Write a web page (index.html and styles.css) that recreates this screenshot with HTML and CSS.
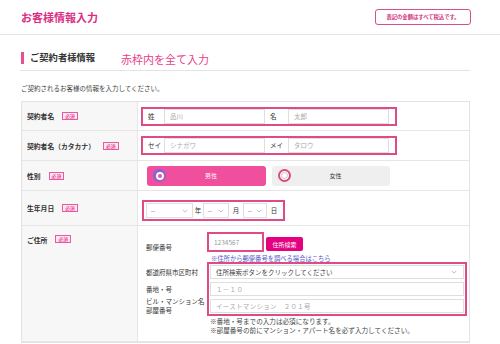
FILE: index.html
```html
<!DOCTYPE html>
<html lang="ja">
<head>
  <meta charset="UTF-8">
  <meta name="viewport" content="width=device-width, initial-scale=1.0">
  <title>お客様情報入力</title>
  <link rel="stylesheet" href="styles.css">
</head>
<body>

  <header class="top">
    <h1 class="top-title">お客様情報入力</h1>
    <span class="tax-note">表記の金額はすべて税込です。</span>
  </header>

  <main class="wrap">
    <div class="sec-head">
      <h2 class="sec-title">ご契約者様情報</h2>
      <span class="sec-memo">赤枠内を全て入力</span>
    </div>
    <p class="lead">ご契約されるお客様の情報を入力してください。</p>

    <div class="form-table">
      <!-- 契約者名 -->
      <div class="row row-name">
        <div class="th">契約者名<span class="req">必須</span></div>
        <div class="td td-name">
          <div class="redbox name-box">
            <span class="sub">姓</span><span class="field ph">品川</span>
            <span class="sub sub-2">名</span><span class="field ph">太郎</span>
          </div>
        </div>
      </div>

      <div class="row row-kana">
        <div class="th">契約者名（カタカナ）<span class="req">必須</span></div>
        <div class="td td-name">
          <div class="redbox name-box">
            <span class="sub">セイ</span><span class="field ph">シナガワ</span>
            <span class="sub sub-2">メイ</span><span class="field ph">タロウ</span>
          </div>
        </div>
      </div>

      <!-- 性別 -->
      <div class="row row-sex">
        <div class="th">性別<span class="req">必須</span></div>
        <div class="td td-sex">
          <div class="sex-btn is-on">
            <span class="radio"><span class="radio-in"></span></span>
            <span class="sex-label">男性</span>
          </div>
          <div class="sex-btn">
            <span class="radio"><span class="radio-in"></span></span>
            <span class="sex-label">女性</span>
          </div>
        </div>
      </div>

      <!-- 生年月日 -->
      <div class="row row-birth">
        <div class="th">生年月日<span class="req">必須</span></div>
        <div class="td td-birth">
          <div class="redbox date-box">
            <span class="sel sel-y">--<svg class="chev" viewBox="0 0 8 5"><polyline points="1,1 4,4 7,1"/></svg></span>
            <span class="unit">年</span>
            <span class="sel sel-m">--<svg class="chev" viewBox="0 0 8 5"><polyline points="1,1 4,4 7,1"/></svg></span>
            <span class="unit unit-w">月</span>
            <span class="sel sel-d">--<svg class="chev" viewBox="0 0 8 5"><polyline points="1,1 4,4 7,1"/></svg></span>
            <span class="unit unit-w">日</span>
          </div>
        </div>
      </div>

      <!-- ご住所 -->
      <div class="row row-addr">
        <div class="th th-top">ご住所<span class="req">必須</span></div>
        <div class="td td-addr">
          <div class="zip-row">
            <span class="addr-label">郵便番号</span>
            <div class="zip">
              <span class="redbox zip-box">1234567</span>
              <span class="btn-search">住所検索</span>
            </div>
          </div>
          <a class="zip-link" href="#">※住所から郵便番号を調べる場合はこちら</a>
          <div class="addr-block">
            <div class="addr-labels">
              <span class="addr-label">都道府県市区町村</span>
              <span class="addr-label">番地・号</span>
              <span class="addr-label">ビル・マンション名<br>部屋番号</span>
            </div>
            <div class="redbox addr-box">
              <span class="field field-sel">住所検索ボタンをクリックしてください<svg class="chev" viewBox="0 0 8 5"><polyline points="1,1 4,4 7,1"/></svg></span>
              <span class="field ph ph-wide">１－１０</span>
              <span class="field ph ph-wide">イーストマンション　２０１号</span>
            </div>
          </div>
          <p class="notes">※番地・号までの入力は必須になります。<br>※部屋番号の前にマンション・アパート名を必ず入力してください。</p>
        </div>
      </div>
    </div>
  </main>

</body>
</html>
```

FILE: styles.css
```css
/* customer form */

* {
  box-sizing: border-box;
  margin: 0;
  padding: 0;
}

body {
  width: 500px;
  font-family: "Noto Sans CJK JP", "Noto Sans", sans-serif;
  color: #333;
  background-color: #fff;
}

/* Header */
.top {
  height: 35px;
  border-bottom: 1px solid #e4e4e4;
  display: flex;
  align-items: center;
  justify-content: space-between;
  padding: 0 29px 0 21px;
}

.top-title {
  font-size: 11px;
  font-weight: 700;
  line-height: 1;
  color: #dc2d84;
}

.tax-note {
  width: 96px;
  height: 16px;
  border: 1px solid #d94d8a;
  border-radius: 3px;
  display: flex;
  align-items: center;
  justify-content: center;
  font-size: 5.3px;
  font-weight: 700;
  color: #d3307f;
}

/* Section */
.wrap {
  margin-left: 20px;
  width: 450px;
}

.sec-head {
  margin-top: 11px;
  height: 25px;
  display: flex;
  align-items: center;
  border-bottom: 1px solid #e4e4e4;
}

.sec-title {
  display: flex;
  align-items: center;
  gap: 6px;
  padding-left: 1px;
  font-size: 9.3px;
  font-weight: 700;
  line-height: 1;
  color: #333;
}

.sec-title::before {
  content: "";
  width: 3px;
  height: 12px;
  background: #e8518f;
}

.sec-memo {
  margin-left: 26px;
  margin-top: 2px;
  font-size: 11px;
  line-height: 1;
  color: #ea3d8c;
}

.lead {
  margin-top: 12px;
  padding-left: 1px;
  font-size: 6.5px;
  line-height: 10px;
  color: #444;
}

/* Table */
.form-table {
  margin: 8px 0 0 1px;
  width: 449px;
  border: 1px solid #e3e3e3;
}

.row {
  display: grid;
  grid-template-columns: 116px 1fr;
  border-bottom: 1px solid #e6e6e6;
}

.row-name { height: 29px; }
.row-kana { height: 30px; }
.row-sex { height: 30px; }
.row-birth { height: 35px; }
.row-addr { height: 116px; }

.th {
  background-color: #f7f7f7;
  border-right: 1px solid #e6e6e6;
  padding-left: 5px;
  display: flex;
  align-items: center;
  font-size: 6.8px;
  font-weight: 700;
  line-height: 10px;
  color: #333;
}

.th-top {
  align-items: flex-start;
  padding-top: 9px;
}

.req {
  margin-left: 8px;
  height: 8px;
  padding: 0 2px;
  border: 1px solid #e75a9c;
  background: #fde9f2;
  color: #e4007f;
  font-size: 4.8px;
  font-weight: 400;
  line-height: 6px;
}

.td {
  display: flex;
  align-items: center;
}

.redbox {
  border: 2px solid #de4b85;
}

.field {
  height: 15px;
  border: 1px solid #dedede;
  background: #fff;
  display: flex;
  align-items: center;
  padding-left: 5px;
  font-size: 6.5px;
  line-height: 1;
  color: #444;
}

.ph {
  color: #aaa;
}

/* name */
.td-name {
  padding-left: 3px;
}

.name-box {
  width: 256px;
  height: 19px;
  display: flex;
  align-items: center;
  padding-left: 5px;
}

.name-box .field {
  width: 101px;
}

.sub {
  width: 16px;
  font-size: 6.5px;
  line-height: 1;
  color: #333;
}

.sub-2 {
  width: 18px;
  margin-left: 5px;
}

/* sex */
.td-sex {
  padding-left: 9px;
  gap: 6px;
}

.sex-btn {
  width: 118px;
  height: 20px;
  border-radius: 3px;
  background: #efefef;
  display: flex;
  align-items: center;
  padding-left: 6px;
}

.sex-btn.is-on {
  width: 119px;
  background: #ef4f9d;
}

.radio {
  width: 13px;
  height: 13px;
  border-radius: 50%;
  border: 2px solid #dc4a80;
  background: #fff;
  display: flex;
  align-items: center;
  justify-content: center;
}

.radio-in {
  width: 7px;
  height: 7px;
  border-radius: 50%;
  border: 1px solid #c8c8c8;
}

.is-on .radio {
  border: none;
  background: #8a63d2;
}

.is-on .radio-in {
  width: 8px;
  height: 8px;
  border: 2px solid #fff;
  background: #ef4f9d;
}

.sex-label {
  flex: 1;
  text-align: center;
  padding-right: 10px;
  font-size: 6px;
  line-height: 1;
  color: #333;
}

.is-on .sex-label {
  color: #fff;
}

/* birth */
.td-birth {
  align-items: flex-start;
  padding: 9px 0 0 4px;
}

.date-box {
  width: 143px;
  height: 21px;
  display: flex;
  align-items: center;
  padding-left: 2px;
}

.sel {
  height: 15px;
  border: 1px solid #dedede;
  background: #fff;
  display: flex;
  align-items: center;
  justify-content: space-between;
  padding: 0 4px 0 4px;
  font-size: 6px;
  line-height: 1;
  color: #555;
}

.sel-y { width: 47px; }
.sel-m { width: 26px; }
.sel-d { width: 24px; }

.chev {
  width: 6px;
  height: 4px;
  fill: none;
  stroke: #aaa;
  stroke-width: 1;
}

.unit {
  width: 10px;
  text-align: center;
  font-size: 6.5px;
  line-height: 1;
  color: #333;
}

.unit-w {
  width: 14px;
}

/* address */
.td-addr {
  display: block;
  padding: 6px 0 0 8px;
}

.zip-row {
  display: flex;
  align-items: flex-end;
}

.addr-label {
  width: 61px;
  font-size: 6.5px;
  line-height: 9px;
  color: #333;
}

.zip {
  display: flex;
  align-items: flex-end;
}

.zip-box {
  width: 57px;
  height: 20px;
  display: flex;
  align-items: center;
  padding-left: 5px;
  font-size: 6.5px;
  color: #999;
}

.btn-search {
  margin: 0 0 1px 2px;
  width: 37px;
  height: 14px;
  border-radius: 2px;
  background: #e4007f;
  color: #fff;
  font-size: 6px;
  display: flex;
  align-items: center;
  justify-content: center;
}

.zip-link {
  display: block;
  margin: 3px 0 0 65px;
  font-size: 6.3px;
  line-height: 7px;
  color: #5553c9;
  text-decoration: underline;
}

.addr-block {
  display: flex;
}

.addr-labels {
  display: flex;
  flex-direction: column;
  gap: 3px;
  padding-top: 3px;
}

.addr-labels .addr-label {
  height: 14px;
  display: flex;
  align-items: center;
}

.addr-box {
  width: 260px;
  display: flex;
  flex-direction: column;
  gap: 3px;
  padding: 1px;
}

.addr-box .field {
  height: 14px;
}

.field-sel {
  justify-content: space-between;
  padding-right: 6px;
}

.ph-wide {
  font-size: 6.5px;
  letter-spacing: 0.3px;
}

.notes {
  margin: 1px 0 0 64px;
  font-size: 6.6px;
  line-height: 9px;
  color: #444;
}
```
